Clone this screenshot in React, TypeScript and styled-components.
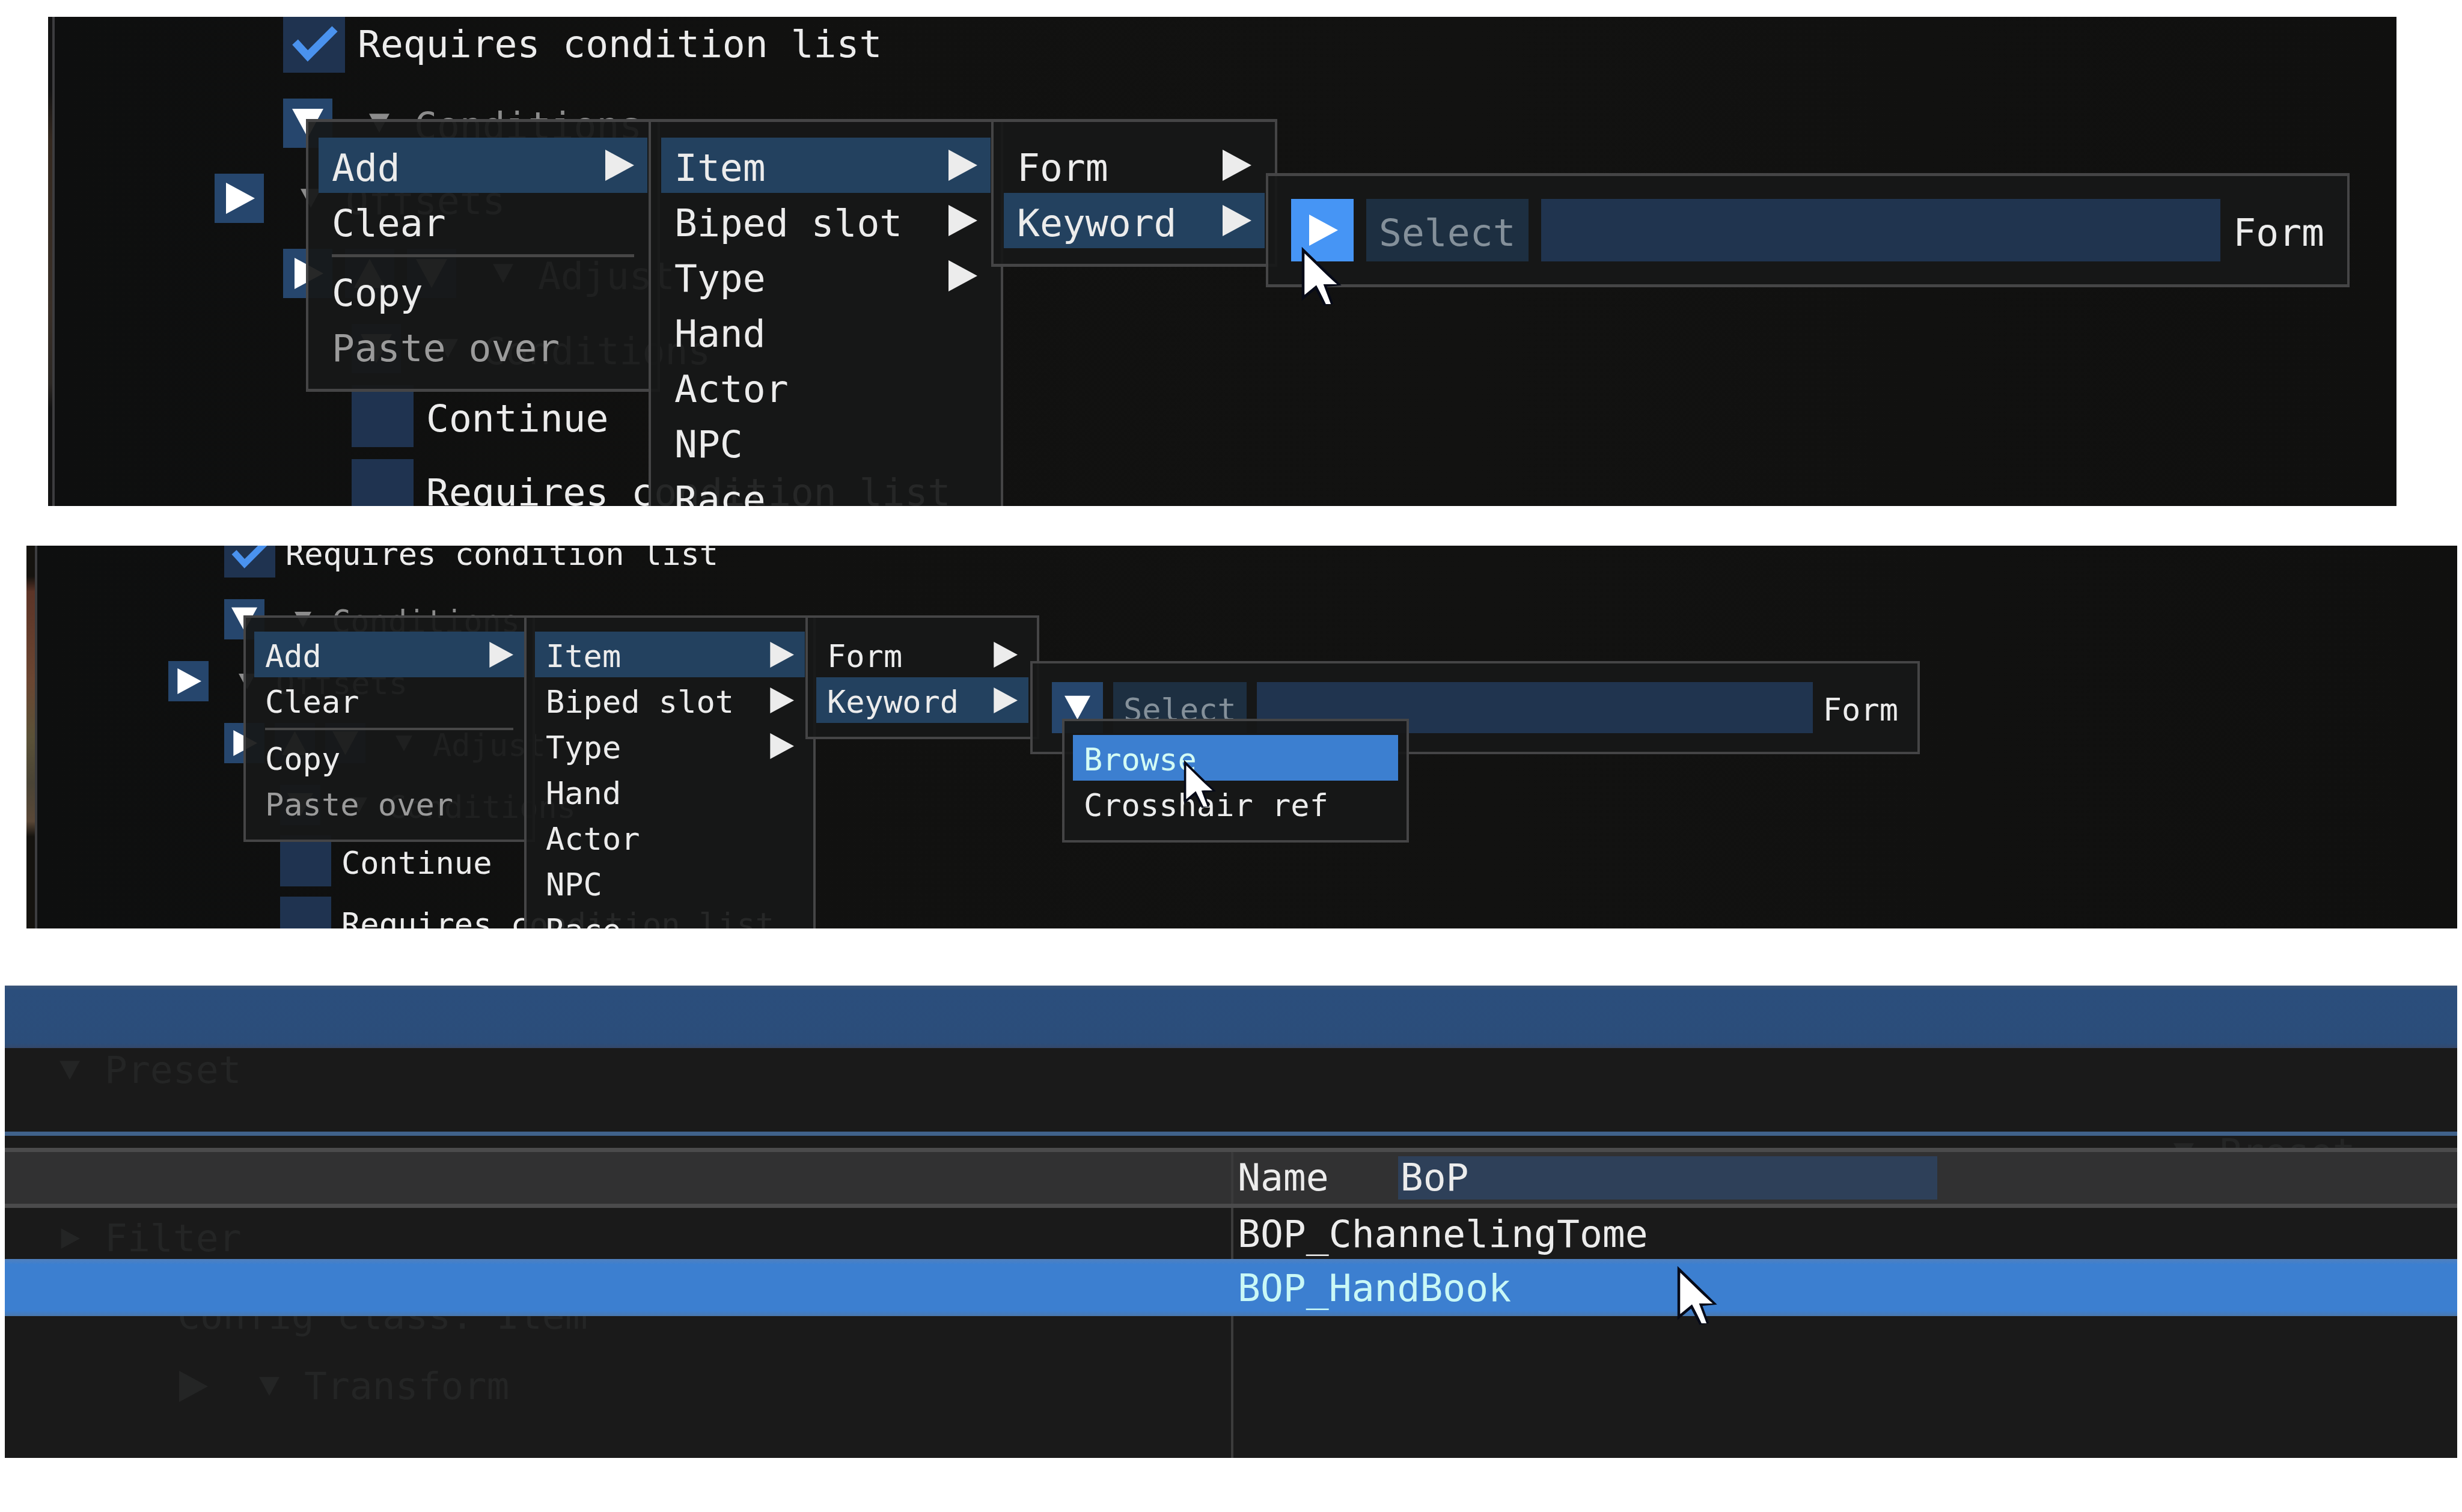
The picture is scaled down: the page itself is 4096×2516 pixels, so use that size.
import React from 'react';
import styled, { createGlobalStyle, css, ThemeProvider } from 'styled-components';

const GlobalStyle = createGlobalStyle`
  *, *::before, *::after { box-sizing: border-box; }
  body { margin: 0; background: #fff; }
  button, input { font: inherit; color: inherit; border: 0; margin: 0; padding: 0; border-radius: 0; }
`;

/* Sizes of one rendering of the overlay window. */
const large = {
  font: 63, nudge: 8, frame: 82, check: 103, field: 104, gap: 21,
  rowGap: 43, tightGap: 20, baseIndent: 266, indent: 114,
  edge: 7, line: 4, border: 5, treeLead: 61, treeArrow: 34, treeGap: 41,
  arrow: 52, item: 92, itemPad: 22, menuX: 17, menuY: 26, sepTop: 10, sepBottom: 9,
  formX: 38, formY: 38, cursorW: 62, cursorH: 98,
};
const small: typeof large = {
  font: 52, nudge: 6, frame: 67, check: 85, field: 85, gap: 17,
  rowGap: 36, tightGap: 17, baseIndent: 218, indent: 93,
  edge: 14, line: 4, border: 4, treeLead: 50, treeArrow: 28, treeGap: 34,
  arrow: 43, item: 76, itemPad: 18, menuX: 14, menuY: 23, sepTop: 8, sepBottom: 7,
  formX: 32, formY: 31, cursorW: 50, cursorH: 80,
};
type Metrics = typeof large;
type T = { theme: any };
const m = (key: keyof Metrics) => ({ theme }: T) => `${theme[key]}px`;

const Page = styled.main`
  display: flex;
  flex-direction: column;
  padding: 28px 8px 90px;
  font-family: "DejaVu Sans Mono", "Liberation Mono", monospace;
  color: #ececec;
`;

const Shot = styled.section<{ $height: number; $margin: string; $edge: string }>`
  position: relative;
  overflow: hidden;
  height: ${p => p.$height}px;
  margin: ${p => p.$margin};
  padding-left: ${m('edge')};
  background: ${p => p.$edge};
  font-size: ${m('font')};
  line-height: ${m('font')};
  white-space: pre;
`;

const WindowBody = styled.div`
  height: 100%;
  overflow: hidden;
  border-left: ${m('line')} solid #3d3d3f;
  background: linear-gradient(90deg, #0e0f0f 0%, #111110 30%, #121211 60%, #10100f 100%);
`;

const Tree = styled.div<{ $shift: number }>`
  display: flex;
  flex-direction: column;
  margin-top: ${p => p.$shift}px;
`;

const Row = styled.div<{ $level: number; $tight?: boolean }>`
  display: flex;
  align-items: center;
  gap: ${m('gap')};
  padding-left: ${p => p.theme.baseIndent + p.theme.indent * p.$level}px;
  margin-bottom: ${p => (p.$tight ? p.theme.tightGap : p.theme.rowGap)}px;
`;

const Label = styled.span`
  padding-top: ${m('nudge')};
`;

const CheckLabel = styled.label`
  display: flex;
  align-items: center;
  gap: ${m('gap')};
`;

const CheckFrame = styled.span`
  display: grid;
  width: ${m('check')};
  height: ${m('check')};
  > * { grid-area: 1 / 1; width: 100%; height: 100%; }
`;

const CheckInput = styled.input`
  appearance: none;
  background: #1f3350;
`;

const ArrowButton = styled.button<{ $hot?: boolean; $field?: boolean }>`
  display: flex;
  flex: none;
  align-items: center;
  justify-content: center;
  width: ${p => (p.$field ? p.theme.field : p.theme.frame)}px;
  height: ${p => (p.$field ? p.theme.field : p.theme.frame)}px;
  background: ${p => (p.$hot ? '#4695f5' : '#26466d')};
  color: #fff;
  &:disabled { background: #1c3049; color: #a0a0a0; }
`;

const TreeNode = styled.span`
  display: flex;
  align-items: center;
  gap: ${m('treeGap')};
  margin-left: calc(${m('treeLead')} - ${m('gap')});
  color: #8c8c8c;
`;

const Popup = styled.div<{ $x: number; $y: number; $w: number }>`
  position: absolute;
  left: ${p => p.$x}px;
  top: ${p => p.$y}px;
  width: ${p => p.$w}px;
  border: ${m('border')} solid #454546;
  border-width: ${m('border')} ${m('line')};
  background: rgba(23, 24, 24, 0.93);
`;

const Menu = styled(Popup)`
  display: flex;
  flex-direction: column;
  padding: ${m('menuY')} ${m('menuX')};
`;

const FormBar = styled(Popup)`
  display: flex;
  align-items: center;
  gap: ${m('gap')};
  padding: ${m('formY')} ${m('formX')};
`;

const Item = styled.button<{ $state?: 'open' | 'hover' }>`
  display: flex;
  align-items: center;
  justify-content: space-between;
  height: ${m('item')};
  padding: 0 ${m('itemPad')};
  background: transparent;
  text-align: left;
  &:disabled { color: #9b9b9b; }
  ${p => p.$state === 'open' && css`background: #23415f;`}
  ${p => p.$state === 'hover' && css`background: #3c7fd0; color: #d3fbf4;`}
`;

const Separator = styled.hr`
  width: calc(100% - 2 * ${m('itemPad')});
  height: ${m('border')};
  margin: ${m('sepTop')} ${m('itemPad')} ${m('sepBottom')};
  border: 0;
  background: #474747;
`;

const SelectButton = styled.button`
  flex: none;
  display: flex;
  align-items: center;
  height: ${m('field')};
  padding: 0 ${m('gap')};
  background: #1d2f41;
  &:disabled { color: #84909a; }
`;

const FieldLabel = styled.label`
  display: flex;
  flex: 1;
  align-items: center;
  gap: ${m('gap')};
  min-width: 0;
`;

const FormInput = styled.input`
  flex: 1;
  min-width: 0;
  height: ${m('field')};
  background: #20344f;
`;

const CursorSvg = styled.svg<{ $x: number; $y: number }>`
  position: absolute;
  left: ${p => p.$x}px;
  top: ${p => p.$y}px;
  width: ${m('cursorW')};
  height: ${m('cursorH')};
  overflow: visible;
`;

const Cursor = ({ x, y }: { x: number; y: number }) => (
  <CursorSvg $x={x} $y={y} viewBox="0 0 12 19" preserveAspectRatio="none" aria-hidden="true">
    <path d="M.4 1.2V16.6L4.5 13.2 7.3 18.6 9.5 18.2 7.4 12.6 11.7 12.2Z" fill="#fff" stroke="#060a18" strokeWidth=".9" />
    <path d="M.9 3V15.4L4.7 12.2 7.7 18.6H9.3L6.9 12.2H11.3Z" fill="#fff" />
  </CursorSvg>
);

const TriSvg = styled.svg<{ $tree?: boolean }>`
  flex: none;
  width: ${p => (p.$tree ? p.theme.treeArrow : p.theme.arrow)}px;
  height: ${p => (p.$tree ? p.theme.treeArrow : p.theme.arrow)}px;
`;

const shapes = {
  right: '4,0 52,26 4,52',
  down: '0,2 52,2 26,50',
  up: '0,50 52,50 26,2',
};

const Tri = ({ dir, tree }: { dir: keyof typeof shapes; tree?: boolean }) => (
  <TriSvg $tree={tree} viewBox="0 0 52 52" aria-hidden="true">
    <polygon points={shapes[dir]} fill="currentColor" />
  </TriSvg>
);

const Check = ({ label, checked }: { label: string; checked?: boolean }) => (
  <CheckLabel>
    <CheckFrame>
      <CheckInput type="checkbox" defaultChecked={checked} />
      {checked && (
        <svg viewBox="0 0 103 103" aria-hidden="true">
          <polyline points="20,52 41,75 86,30" fill="none" stroke="#4a92ee" strokeWidth="13" />
        </svg>
      )}
    </CheckFrame>
    <Label>{label}</Label>
  </CheckLabel>
);

const Node = ({ label }: { label: string }) => (
  <TreeNode>
    <Tri dir="down" tree />
    <Label>{label}</Label>
  </TreeNode>
);

const SettingsTree = ({ shift }: { shift: number }) => (
  <Tree $shift={shift}>
    <Row $level={1}><Check label="Requires condition list" checked /></Row>
    <Row $level={1}>
      <ArrowButton aria-label="Conditions menu"><Tri dir="down" /></ArrowButton>
      <Node label="Conditions" />
    </Row>
    <Row $level={0}>
      <ArrowButton aria-label="Offsets menu"><Tri dir="right" /></ArrowButton>
      <Node label="Offsets" />
    </Row>
    <Row $level={1}>
      <ArrowButton aria-label="Adjust menu"><Tri dir="right" /></ArrowButton>
      <ArrowButton disabled aria-label="Move up"><Tri dir="up" /></ArrowButton>
      <ArrowButton disabled aria-label="Move down"><Tri dir="down" /></ArrowButton>
      <Node label="Adjust" />
    </Row>
    <Row $level={2} $tight>
      <ArrowButton disabled aria-label="Nested conditions menu"><Tri dir="down" /></ArrowButton>
      <Node label="Conditions" />
    </Row>
    <Row $level={2} $tight><Check label="Continue" /></Row>
    <Row $level={2} $tight><Check label="Requires condition list" /></Row>
  </Tree>
);

type Entry = { label: string; sub?: boolean; open?: boolean; off?: boolean };

const rootMenu: Entry[][] = [
  [{ label: 'Add', sub: true, open: true }, { label: 'Clear' }],
  [{ label: 'Copy' }, { label: 'Paste over', off: true }],
];
const addMenu: Entry[][] = [[
  { label: 'Item', sub: true, open: true },
  { label: 'Biped slot', sub: true },
  { label: 'Type', sub: true },
  { label: 'Hand' },
  { label: 'Actor' },
  { label: 'NPC' },
  { label: 'Race' },
]];
const itemMenu: Entry[][] = [[
  { label: 'Form', sub: true },
  { label: 'Keyword', sub: true, open: true },
]];

type Box = [number, number, number];

const MenuPopup = ({ groups, at }: { groups: Entry[][]; at: Box }) => (
  <Menu $x={at[0]} $y={at[1]} $w={at[2]} role="menu">
    {groups.map((group, i) => (
      <React.Fragment key={i}>
        {i > 0 && <Separator />}
        {group.map(e => (
          <Item key={e.label} role="menuitem" disabled={e.off} $state={e.open ? 'open' : undefined}>
            <Label>{e.label}</Label>
            {e.sub && <Tri dir="right" />}
          </Item>
        ))}
      </React.Fragment>
    ))}
  </Menu>
);

const KeywordForm = ({ at, hot }: { at: Box; hot?: boolean }) => (
  <FormBar $x={at[0]} $y={at[1]} $w={at[2]}>
    <ArrowButton $field $hot={hot} aria-label="Form source"><Tri dir={hot ? 'right' : 'down'} /></ArrowButton>
    <SelectButton disabled><Label>Select</Label></SelectButton>
    <FieldLabel>
      <FormInput type="text" />
      <Label>Form</Label>
    </FieldLabel>
  </FormBar>
);

/* Record browser */

const Browser = styled.section`
  position: relative;
  overflow: hidden;
  height: 786px;
  margin-top: 95px;
  background: #1a1a1a;
  font-size: 63px;
  line-height: 82px;
  white-space: pre;
`;

const Backdrop = styled.div`
  position: absolute;
  inset: 0;
  color: #242525;
`;

const Ghost = styled.div<{ $x: number; $y: number }>`
  position: absolute;
  left: ${p => p.$x}px;
  top: ${p => p.$y}px;
  display: flex;
  align-items: center;
  gap: 41px;
`;

const Foreground = styled.div`
  position: relative;
`;

const TitleBar = styled.header`
  height: 104px;
  background: linear-gradient(#3b5578, #2b4e7c 8px, #2b4d7a 96px, #34486a);
`;

const TabStrip = styled.div`
  height: 146px;
  margin-bottom: 20px;
  border-bottom: 7px solid #40628b;
`;

const Records = styled.table`
  width: 100%;
  table-layout: fixed;
  border-spacing: 0;
  border-collapse: separate;
  text-align: left;
`;

const HeadCell = styled.th<{ $divided?: boolean }>`
  height: 100px;
  padding: 0 0 0 11px;
  border: 0 solid #4b4b4c;
  border-width: 7px 0;
  background: #313132;
  font-weight: normal;
  ${p => p.$divided && css`box-shadow: inset 4px 0 #3a3a3b;`}
`;

const HeadContent = styled.label`
  display: flex;
  align-items: center;
  gap: 115px;
`;

const FilterInput = styled.input`
  width: 897px;
  height: 72px;
  padding: 0 0 0 4px;
  background: #2e4059;
`;

const Cell = styled.td<{ $h: number; $divided?: boolean; $hover?: boolean }>`
  height: ${p => p.$h}px;
  padding: 2px 0 0 11px;
  line-height: 72px;
  ${p => p.$divided && css`box-shadow: inset 4px 0 #3c3c3c;`}
  ${p => p.$hover && css`background: linear-gradient(#5180bd, #3c7fd0 9px, #3c7fd0 86px, #4a78ad); color: #c9f8f6;`}
`;

export default function App() {
  return (
    <Page>
      <GlobalStyle />
      <ThemeProvider theme={large}>
        <Shot $height={814} $margin="0 101px 0 72px" $edge="linear-gradient(#121212 15%, #35291f 25%, #3a3028 60%, #2c2824 75%, #121212 80%)">
          <WindowBody><SettingsTree shift={-10} /></WindowBody>
          <MenuPopup groups={rootMenu} at={[429, 170, 589]} />
          <MenuPopup groups={addMenu} at={[999, 170, 590]} />
          <MenuPopup groups={itemMenu} at={[1569, 170, 476]} />
          <KeywordForm at={[2026, 260, 1803]} hot />
          <Cursor x={2086} y={382} />
        </Shot>
      </ThemeProvider>
      <ThemeProvider theme={small}>
        <Shot $height={637} $margin="66px 0 0 36px" $edge="linear-gradient(#15130f 8%, #5c3427 12%, #6b4632 35%, #5b5238 50%, #4a4436 62%, #5a4837 72%, #15130f 76%)">
          <WindowBody><SettingsTree shift={-32} /></WindowBody>
          <MenuPopup groups={rootMenu} at={[361, 116, 485]} />
          <MenuPopup groups={addMenu} at={[828, 116, 485]} />
          <MenuPopup groups={itemMenu} at={[1296, 116, 389]} />
          <KeywordForm at={[1670, 192, 1480]} />
          <Menu $x={1723} $y={288} $w={577} role="menu">
            <Item role="menuitem" $state="hover"><Label>Browse</Label></Item>
            <Item role="menuitem"><Label>Crosshair ref</Label></Item>
          </Menu>
          <Cursor x={1926} y={356} />
        </Shot>
      </ThemeProvider>
      <ThemeProvider theme={large}>
        <Browser>
          <Backdrop>
            <Ghost $x={91} $y={100}><Tri dir="down" tree />Preset</Ghost>
            <Ghost $x={91} $y={380}><Tri dir="right" tree />Filter</Ghost>
            <Ghost $x={287} $y={509}>Config class: Item</Ghost>
            <Ghost $x={286} $y={641}><Tri dir="right" /></Ghost>
            <Ghost $x={423} $y={626}><Tri dir="down" tree />Transform</Ghost>
            <Ghost $x={3608} $y={237}><Tri dir="down" tree />Preset</Ghost>
          </Backdrop>
          <Foreground>
            <TitleBar />
            <TabStrip />
            <Records>
              <thead>
                <tr>
                  <HeadCell />
                  <HeadCell $divided>
                    <HeadContent>
                      Name
                      <FilterInput type="text" defaultValue="BoP" />
                    </HeadContent>
                  </HeadCell>
                </tr>
              </thead>
              <tbody>
                <tr><Cell $h={85} /><Cell $h={85} $divided>BOP_ChannelingTome</Cell></tr>
                <tr><Cell $h={95} $hover /><Cell $h={95} $hover>BOP_HandBook</Cell></tr>
                <tr><Cell $h={236} /><Cell $h={236} $divided /></tr>
              </tbody>
            </Records>
          </Foreground>
          <Cursor x={2783} y={466} />
        </Browser>
      </ThemeProvider>
    </Page>
  );
}
